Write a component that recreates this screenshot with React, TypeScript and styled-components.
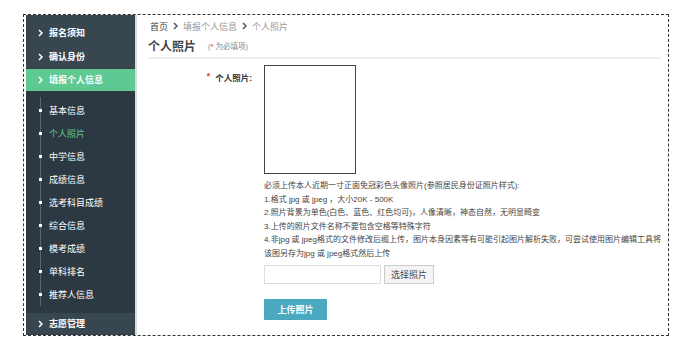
import styled, { createGlobalStyle } from "styled-components";

const GlobalStyle = createGlobalStyle`
  html, body {
    margin: 0;
    padding: 0;
    background: #fff;
  }
  body {
    font-family: "Liberation Sans", "Noto Sans CJK SC", sans-serif;
    color: #333;
  }
  * {
    box-sizing: border-box;
  }
`;

// cadre en pointillé autour de toute la page
const Frame = styled.div`
  margin: 14px 0 0 23px;
  width: 646px;
  height: 322px;
  border: 1px dashed #333;
  padding-left: 2px;
  display: flex;
  overflow: hidden;
`;

const Sidebar = styled.nav`
  width: 111px;
  flex-shrink: 0;
  background: #2c3942;
  border-right: 2px solid #d9dcde;
  display: flex;
  flex-direction: column;
`;

const TopGroup = styled.div`
  background: #38474f;
  padding-top: 6px;
`;

const MenuRow = styled.div<{ $active?: boolean; $light?: boolean }>`
  height: 24px;
  display: flex;
  align-items: center;
  gap: 6px;
  padding-left: 12px;
  font-size: 9px;
  font-weight: bold;
  color: #fff;
  background: ${(p) => (p.$active ? "#5fc994" : p.$light ? "#38474f" : "transparent")};
  border-bottom: 1px solid ${(p) => (p.$active ? "#5fc994" : "#33424a")};
`;

const SubMenu = styled.div`
  position: relative;
  padding: 8px 0 7px;
  flex: 1;

  &::before {
    content: "";
    position: absolute;
    left: 14px;
    top: 6px;
    bottom: 7px;
    width: 1px;
    background: #56656e;
  }
`;

const SubItem = styled.div<{ $active?: boolean }>`
  position: relative;
  height: 23px;
  display: flex;
  align-items: center;
  padding-left: 23px;
  font-size: 9px;
  color: ${(p) => (p.$active ? "#5fc994" : "#fff")};

  &::before {
    content: "";
    position: absolute;
    left: 13px;
    top: 10px;
    width: 3px;
    height: 3px;
    background: #fff;
  }
`;

const Main = styled.main`
  flex: 1;
  padding: 4px 11px 0 11px;
  display: flex;
  flex-direction: column;
`;

const Breadcrumb = styled.div`
  height: 14px;
  display: flex;
  align-items: center;
  gap: 5px;
  font-size: 9px;
  color: #999;
  padding-left: 2px;
`;

const Crumb = styled.span<{ $home?: boolean }>`
  color: ${(p) => (p.$home ? "#444" : "#9a9a9a")};
`;

const TitleRow = styled.div`
  margin-top: 4px;
  height: 22px;
  display: flex;
  align-items: center;
  gap: 12px;
  border-bottom: 2px solid #eeeeee;
  padding-bottom: 3px;
`;

const Title = styled.h1`
  margin: 0;
  font-size: 12px;
  font-weight: bold;
  color: #444;
`;

const Hint = styled.span`
  font-size: 7.5px;
  color: #888;
`;

const Star = styled.span`
  color: #e53935;
`;

const FormRow = styled.div`
  margin-top: 6px;
  display: grid;
  grid-template-columns: 104px 1fr;
  column-gap: 12px;
`;

const Label = styled.label`
  display: flex;
  justify-content: flex-end;
  gap: 5px;
  font-size: 8.5px;
  font-weight: bold;
  color: #333;
  padding-top: 6px;
`;

const Field = styled.div`
  display: flex;
  flex-direction: column;
  align-items: flex-start;
`;

const PhotoBox = styled.div`
  width: 92px;
  height: 109px;
  border: 1px solid #444;
  background: #fff;
`;

const Notes = styled.div`
  margin-top: 5px;
  font-size: 8px;
  line-height: 13.5px;
  color: #444;
  white-space: nowrap;
`;

const PickRow = styled.div`
  margin-top: 5px;
  display: flex;
  gap: 3px;
`;

const FileInput = styled.div`
  width: 117px;
  height: 19px;
  border: 1px solid #ddd;
`;

const PickButton = styled.button`
  width: 50px;
  height: 19px;
  border: 1px solid #ccc;
  background: #f4f4f4;
  font-family: inherit;
  font-size: 9px;
  color: #444;
  padding: 0;
`;

const UploadButton = styled.button`
  margin-top: 15px;
  width: 63px;
  height: 21px;
  border: none;
  border-radius: 1px;
  background: #4aa9c1;
  color: #fff;
  font-family: inherit;
  font-size: 9px;
  font-weight: bold;
  padding: 0;
`;

const Chevron = ({ color = "#fff" }: { color?: string }) => (
  <svg width="5" height="8" viewBox="0 0 5 8">
    <polyline points="1,1 4,4 1,7" fill="none" stroke={color} strokeWidth="1.5" />
  </svg>
);

const subItems = [
  "基本信息",
  "个人照片",
  "中学信息",
  "成绩信息",
  "选考科目成绩",
  "综合信息",
  "模考成绩",
  "单科排名",
  "推荐人信息",
];

const notes = [
  "必须上传本人近期一寸正面免冠彩色头像照片(参照居民身份证照片样式):",
  "1.格式 jpg 或 jpeg ，大小20K - 500K",
  "2.照片背景为单色(白色、蓝色、红色均可)，人像清晰，神态自然，无明显畸变",
  "3.上传的照片文件名称不要包含空格等特殊字符",
  "4.非jpg 或 jpeg格式的文件修改后缀上传，图片本身因素等有可能引起图片解析失败，可尝试使用图片编辑工具将",
  "该图另存为jpg 或 jpeg格式然后上传",
];

export default function App() {
  return (
    <>
      <GlobalStyle />
      <Frame>
        <Sidebar>
          <TopGroup>
            <MenuRow>
              <Chevron />
              报名须知
            </MenuRow>
            <MenuRow>
              <Chevron />
              确认身份
            </MenuRow>
          </TopGroup>
          <MenuRow $active>
            <Chevron />
            填报个人信息
          </MenuRow>
          <SubMenu>
            {subItems.map((s) => (
              <SubItem key={s} $active={s === "个人照片"}>
                {s}
              </SubItem>
            ))}
          </SubMenu>
          <MenuRow $light>
            <Chevron />
            志愿管理
          </MenuRow>
        </Sidebar>
        <Main>
          <Breadcrumb>
            <Crumb $home>首页</Crumb>
            <Chevron color="#555" />
            <Crumb>填报个人信息</Crumb>
            <Chevron color="#555" />
            <Crumb>个人照片</Crumb>
          </Breadcrumb>
          <TitleRow>
            <Title>个人照片</Title>
            <Hint>
              (<Star>*</Star> 为必填项)
            </Hint>
          </TitleRow>
          <FormRow>
            <Label>
              <Star>*</Star>
              <span>个人照片:</span>
            </Label>
            <Field>
              <PhotoBox />
              <Notes>
                {notes.map((n) => (
                  <div key={n}>{n}</div>
                ))}
              </Notes>
              <PickRow>
                <FileInput />
                <PickButton>选择照片</PickButton>
              </PickRow>
              <UploadButton>上传照片</UploadButton>
            </Field>
          </FormRow>
        </Main>
      </Frame>
    </>
  );
}
